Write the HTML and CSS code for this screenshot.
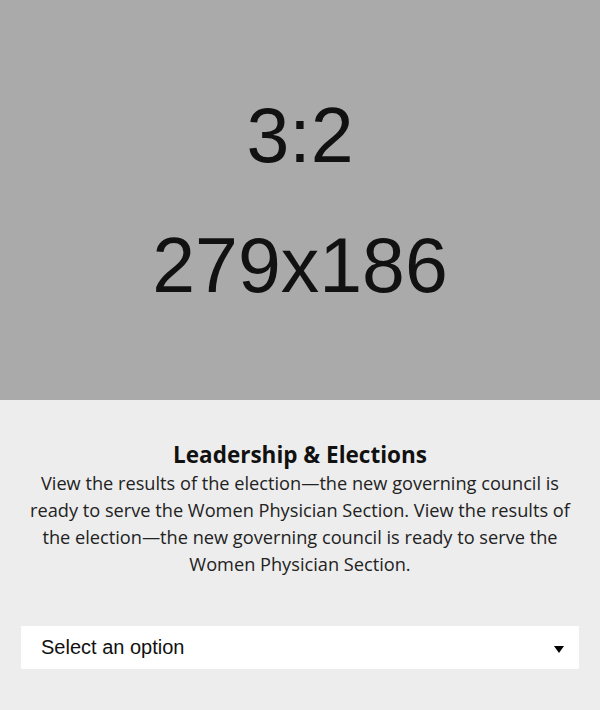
FILE: index.html
```html
<!DOCTYPE html>
<html lang="en">
<head>
<meta charset="utf-8">
<title>Leadership &amp; Elections</title>
<link rel="stylesheet" href="styles.css">
</head>
<body>
<div class="card">
  <div class="placeholder">
    <div class="ph-line">3:2</div>
    <div class="ph-line">279x186</div>
  </div>
  <div class="content">
    <h2 class="title">Leadership &amp; Elections</h2>
    <p class="desc">View the results of the election—the new governing council is ready to serve the Women Physician Section. View the results of the election—the new governing council is ready to serve the Women Physician Section.</p>
    <div class="select">
      <span class="select-label">Select an option</span>
      <span class="select-arrow"></span>
    </div>
  </div>
</div>
</body>
</html>
```

FILE: styles.css
```css
html, body {
  margin: 0;
  padding: 0;
  background: #ededed;
}
.card {
  width: 600px;
  height: 710px;
  display: flex;
  flex-direction: column;
}
.placeholder {
  height: 400px;
  background: #aaaaaa;
  color: #111;
  font-family: "Liberation Sans", Arial, sans-serif;
  font-size: 77px;
  display: flex;
  flex-direction: column;
  align-items: center;
  justify-content: center;
  gap: 42px;
}
.ph-line {
  line-height: 88px;
}
.content {
  flex: 1;
  background: #ededed;
  padding: 40px 21px 0;
  display: flex;
  flex-direction: column;
  align-items: stretch;
}
.title {
  margin: 0;
  text-align: center;
  font-family: "Open Sans", Lato, sans-serif;
  font-weight: 700;
  font-size: 22.5px;
  line-height: 30px;
  color: #111;
}
.desc {
  margin: 0;
  text-align: center;
  font-family: "Open Sans", Lato, sans-serif;
  font-size: 18.2px;
  line-height: 27px;
  color: #222;
}
.select {
  margin-top: 48px;
  height: 43px;
  background: #fff;
  display: flex;
  align-items: center;
  justify-content: space-between;
  padding: 0 15px 0 20px;
  font-family: "Liberation Sans", Arial, sans-serif;
  font-size: 20px;
  color: #111;
}
.select-arrow {
  width: 0;
  height: 0;
  border-left: 5px solid transparent;
  border-right: 5px solid transparent;
  border-top: 7px solid #000;
  margin-top: 4px;
}
```
